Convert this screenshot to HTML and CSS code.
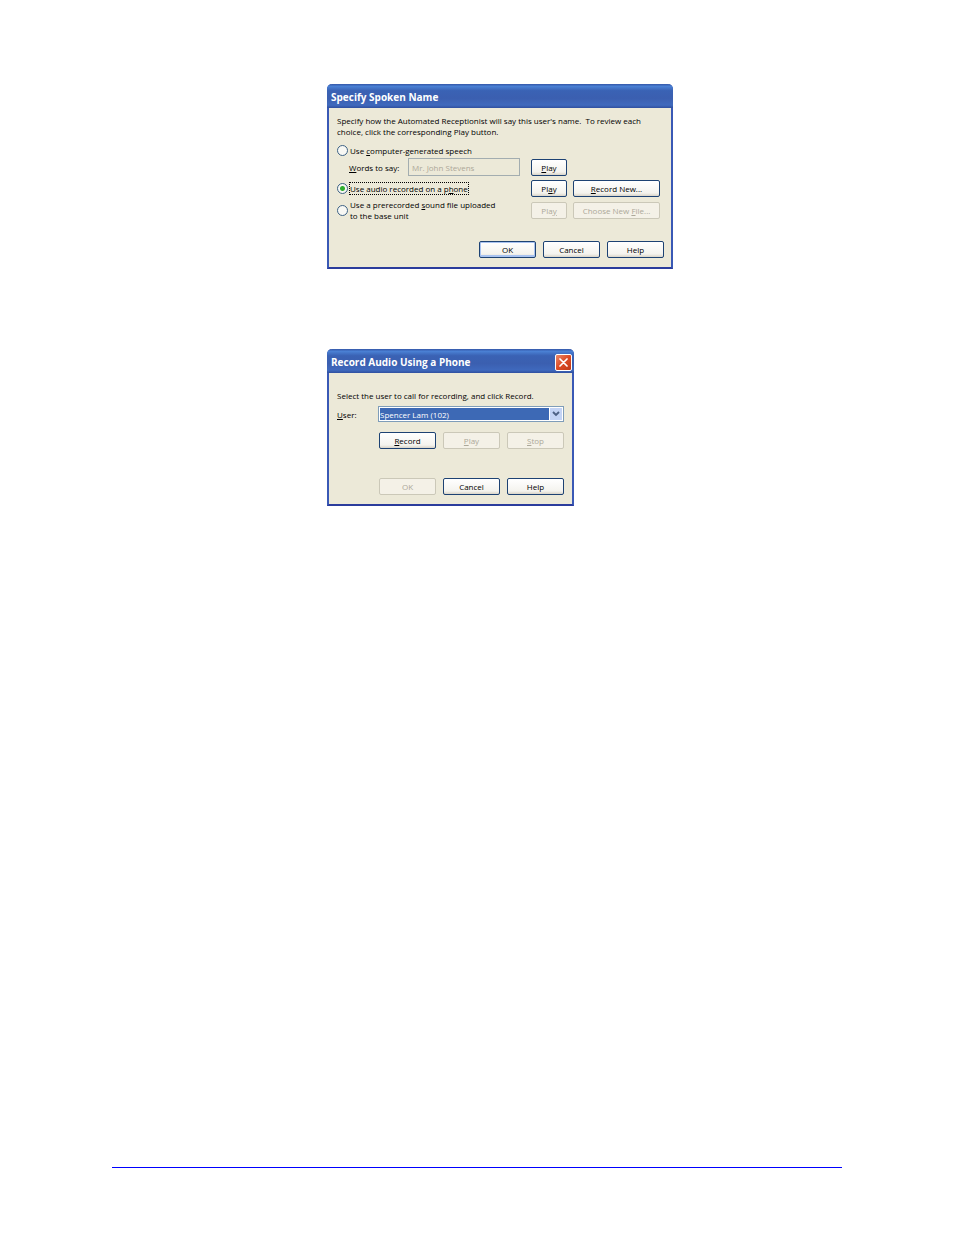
FILE: index.html
```
<!DOCTYPE html>
<html lang="en">
<head>
  <meta charset="UTF-8">
  <title>Specify Spoken Name</title>
  <link rel="stylesheet" href="styles.css">
</head>
<body>
  <main>
    <section class="dialog dialog-name">
      <div class="titlebar">
        <h2>Specify Spoken Name</h2>
      </div>
      <form class="content">
        <p>Specify how the Automated Receptionist will say this user's name.&nbsp; To review each choice, click the corresponding Play button.</p>
        <div class="option generated">
          <input type="radio" name="source" id="generated">
          <label for="generated">Use <u>c</u>omputer-generated speech</label>
        </div>
        <div class="row words">
          <label for="words"><u>W</u>ords to say:</label>
          <input type="text" id="words" value="Mr. John Stevens" disabled>
          <button type="button" class="small"><u>P</u>lay</button>
        </div>
        <div class="row phone">
          <div class="option">
            <input type="radio" name="source" id="phone" checked>
            <label for="phone" class="focused">Use audio recorded on a p<u>h</u>one</label>
          </div>
          <button type="button" class="small">Pl<u>a</u>y</button>
          <button type="button" class="wide"><u>R</u>ecord New...</button>
        </div>
        <div class="row file">
          <div class="option">
            <input type="radio" name="source" id="file">
            <label for="file">Use a prerecorded <u>s</u>ound file uploaded<br>to the base unit</label>
          </div>
          <button type="button" class="small" disabled>Pla<u>y</u></button>
          <button type="button" class="wide" disabled>Choose New <u>F</u>ile...</button>
        </div>
        <div class="buttons">
          <button type="button" class="default">OK</button>
          <button type="button">Cancel</button>
          <button type="button">Help</button>
        </div>
      </form>
    </section>

    <section class="dialog dialog-record">
      <div class="titlebar">
        <h2>Record Audio Using a Phone</h2>
        <button type="button" class="close" aria-label="Close">
          <svg width="9" height="9" viewBox="0 0 9 9">
            <path d="M1 1L8 8M8 1L1 8" stroke="#fff" stroke-width="1.7" stroke-linecap="round"/>
          </svg>
        </button>
      </div>
      <form class="content">
        <p>Select the user to call for recording, and click Record.</p>
        <div class="user">
          <label for="user"><u>U</u>ser:</label>
          <div class="combo">
            <select id="user">
              <option>Spencer Lam (102)</option>
            </select>
            <span class="arrow">
              <svg width="8" height="6" viewBox="0 0 8 6">
                <path d="M1 1L4 4L7 1" fill="none" stroke="#4d6185" stroke-width="1.9"/>
              </svg>
            </span>
          </div>
        </div>
        <div class="buttons">
          <button type="button"><u>R</u>ecord</button>
          <button type="button" disabled><u>P</u>lay</button>
          <button type="button" disabled><u>S</u>top</button>
        </div>
        <div class="buttons">
          <button type="button" disabled>OK</button>
          <button type="button">Cancel</button>
          <button type="button">Help</button>
        </div>
      </form>
    </section>
  </main>
  <footer></footer>
</body>
</html>
```

FILE: styles.css
```
* {
  box-sizing: border-box;
}
body {
  display: flex;
  flex-direction: column;
  min-height: 100vh;
  margin: 0;
  background-color: #fff;
  font-family: "Open Sans", "Noto Sans", sans-serif;
  font-size: 8px;
  line-height: 11px;
  color: #000;
}
main {
  flex: 1;
  display: flex;
  flex-direction: column;
  gap: 80px;
  padding: 84px 16px 0 327px;
}
footer {
  height: 68px;
  margin: 0 112px;
  border-top: 1px solid #00f;
}
h2,
p {
  margin: 0;
}
u {
  text-underline-offset: 1px;
}
.dialog {
  width: 100%;
  border: 2px solid #3a59b5;
  border-top: none;
  border-bottom-color: #2b3c9c;
  border-radius: 5px 5px 0 0;
  background-color: #ece9d8;
}
.dialog-name {
  max-width: 346px;
}
.dialog-record {
  max-width: 247px;
}
.titlebar {
  display: flex;
  align-items: center;
  justify-content: space-between;
  height: 24px;
  margin: 0 -2px;
  padding: 2px 2px 0 4px;
  border-radius: 5px 5px 0 0;
  background: linear-gradient(#3457a8, #4a80d4 10%, #3a62b4 28%, #3b5fb0 60%, #3f69bd 88%, #2f4f9f);
  color: #fff;
}
.titlebar h2 {
  font-size: 10px;
}
.content {
  padding: 7px 7px 9px 8px;
}
.dialog-name p {
  padding-right: 16px;
}
.option {
  display: flex;
  align-items: center;
  gap: 2px;
}
.generated {
  margin-top: 8px;
}
.row {
  display: flex;
  align-items: center;
  gap: 6px;
  margin-right: 4px;
}
.row .option {
  flex: 1;
}
.words {
  margin-top: 2px;
  margin-left: 12px;
}
.words label {
  width: 53px;
  white-space: nowrap;
}
.words .small {
  margin: 0 93px 0 5px;
}
.phone {
  margin-top: 4px;
}
.file {
  margin-top: 2px;
}
input[type="text"] {
  flex: 1;
  min-width: 0;
  height: 18px;
  padding: 0 3px;
  border: 1px solid #a3adb0;
  background-color: #ece9d8;
  font: inherit;
  color: #aca899;
}
input[type="radio"] {
  appearance: none;
  flex: none;
  width: 11px;
  height: 11px;
  margin: 0;
  border: 1px solid #3d6285;
  border-radius: 50%;
  background-color: #f8f8f4;
}
input[type="radio"]:checked {
  background: radial-gradient(circle, #2fae2f 2px, #f8f8f4 3px);
}
.focused {
  outline: 1px dotted #000;
}
button {
  width: 57px;
  height: 17px;
  padding: 0;
  border: 1px solid #1d4273;
  border-radius: 2px;
  background: linear-gradient(#fff, #f4f3ee 80%, #d9d4c8);
  font: inherit;
  color: #000;
}
button:disabled {
  border-color: #cbc8b8;
  background: #f4f1e7;
  color: #aca899;
}
.default {
  box-shadow: inset 0 0 0 1px #a9c3f0, inset 0 -2px 0 #a9c3f0;
}
.small {
  width: 36px;
}
.wide {
  width: 87px;
}
.buttons {
  display: flex;
  justify-content: flex-end;
  gap: 7px;
}
.dialog-name .buttons {
  margin-top: 20px;
}
.close {
  display: flex;
  align-items: center;
  justify-content: center;
  width: 17px;
  border-color: #fff;
  background: linear-gradient(135deg, #ea8a6c, #dc4a24 50%, #c03a18);
}
.dialog-record .content {
  padding: 17px 8px 9px;
}
.user {
  display: flex;
  align-items: center;
  margin-top: 5px;
}
.user label {
  width: 41px;
}
.combo {
  position: relative;
  flex: 1;
}
select {
  appearance: none;
  display: block;
  width: 100%;
  height: 16px;
  padding: 0 16px 0 1px;
  border: 1px solid #7f9db9;
  border-radius: 0;
  outline: 1px solid #fff;
  outline-offset: -2px;
  background-color: #3d69b5;
  font: inherit;
  color: #fff;
}
.arrow {
  position: absolute;
  top: 1px;
  right: 1px;
  display: flex;
  align-items: center;
  justify-content: center;
  width: 14px;
  height: 14px;
  border: 1px solid #fff;
  background-color: #c3d3f5;
  pointer-events: none;
}
.dialog-record .buttons {
  margin-top: 10px;
}
.dialog-record .buttons:last-child {
  margin-top: 29px;
}
```
